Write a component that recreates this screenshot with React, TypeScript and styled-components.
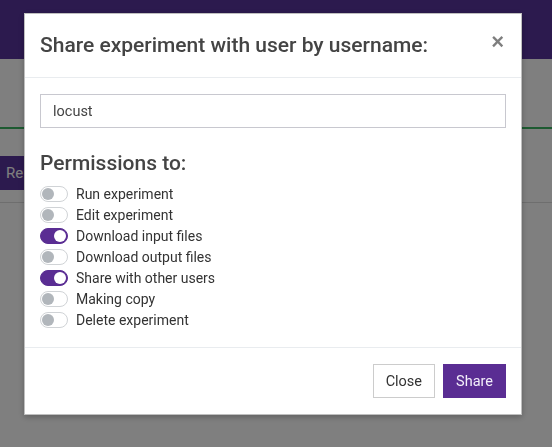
import React, { useState } from "react";
import styled, { createGlobalStyle } from "styled-components";

const Global = createGlobalStyle`
  html, body { margin: 0; padding: 0; }
  body {
    font-family: Roboto, "Liberation Sans", sans-serif;
    background: #ffffff;
    width: 552px;
    height: 447px;
    overflow: hidden;
  }
  * { box-sizing: border-box; }
`;

const Page = styled.div`
  width: 552px;
  height: 447px;
  display: flex;
  flex-direction: column;
  background: #fff;
`;

const TopBar = styled.div`
  height: 59px;
  flex: none;
  background: #58349d;
`;

const SubHeader = styled.div`
  height: 70px;
  flex: none;
  border-bottom: 2px solid #3ab562;
`;

const ActionRow = styled.div`
  height: 74px;
  flex: none;
  display: flex;
  align-items: flex-start;
  padding-top: 27px;
  border-bottom: 1px solid #dcdcdc;
`;

const PageButton = styled.button`
  height: 34px;
  width: 24px;
  overflow: hidden;
  white-space: nowrap;
  text-align: left;
  padding: 0 0 0 6px;
  border: none;
  background: #58349d;
  color: #ffffff;
  font-family: Roboto, sans-serif;
  font-size: 15px;
`;

const Overlay = styled.div`
  position: fixed;
  inset: 0;
  background: rgba(0, 0, 0, 0.5);
  display: flex;
  align-items: flex-start;
  padding: 13px 0 0 24px;
`;

const Modal = styled.div`
  width: 498px;
  background: #fff;
  border: 1px solid rgba(0, 0, 0, 0.25);
  box-shadow: 0 2px 6px rgba(0, 0, 0, 0.25);
  display: flex;
  flex-direction: column;
`;

const Header = styled.div`
  display: flex;
  align-items: flex-start;
  justify-content: space-between;
  padding: 16px 15px 16px 15px;
  border-bottom: 1px solid #e9ecef;
`;

const Title = styled.h5`
  margin: 0;
  font-size: 21px;
  line-height: 31px;
  font-weight: 500;
  color: #444;
`;

const CloseX = styled.button`
  border: none;
  background: transparent;
  padding: 0;
  margin: 1px 2px 0 0;
  font-size: 22px;
  font-weight: 700;
  line-height: 1;
  color: #000;
  opacity: 0.5;
  font-family: "Liberation Sans", Arial, sans-serif;
  cursor: pointer;
`;

const Body = styled.div`
  padding: 16px 15px 17px 15px;
  display: flex;
  flex-direction: column;
`;

const Input = styled.input`
  height: 34px;
  width: 100%;
  border: 1px solid #c8c8cf;
  padding: 0 12px;
  font-family: Roboto, sans-serif;
  font-size: 14.5px;
  color: #444;
  outline: none;
`;

const Heading = styled.h5`
  margin: 20px 0 4px;
  font-size: 21px;
  line-height: 31px;
  font-weight: 500;
  color: #444;
`;

const List = styled.div`
  display: flex;
  flex-direction: column;
`;

const Row = styled.label`
  display: flex;
  align-items: center;
  height: 21px;
  gap: 8px;
  font-size: 14px;
  color: #333;
  cursor: pointer;
`;

const Track = styled.span<{ $on: boolean }>`
  position: relative;
  width: 28px;
  height: 16px;
  border-radius: 8px;
  border: 1px solid ${(p) => (p.$on ? "#5a2d93" : "#d0d3d6")};
  background: ${(p) => (p.$on ? "#5a2d93" : "#fff")};
  flex: none;
`;

const Knob = styled.span<{ $on: boolean }>`
  position: absolute;
  top: 1px;
  left: ${(p) => (p.$on ? "13px" : "1px")};
  width: 12px;
  height: 12px;
  border-radius: 50%;
  background: ${(p) => (p.$on ? "#fff" : "#b1b6bb")};
`;

const Footer = styled.div`
  display: flex;
  justify-content: flex-end;
  gap: 8px;
  padding: 16px 15px 16px;
  border-top: 1px solid #e9ecef;
`;

const Button = styled.button<{ $primary?: boolean }>`
  height: 34px;
  padding: 0 12px;
  font-family: Roboto, sans-serif;
  font-size: 14.5px;
  border: 1px solid ${(p) => (p.$primary ? "#5a2d93" : "#cccccc")};
  background: ${(p) => (p.$primary ? "#5a2d93" : "#fff")};
  color: ${(p) => (p.$primary ? "#f2eefa" : "#333")};
  cursor: pointer;
`;

const perms: [string, boolean][] = [
  ["Run experiment", false],
  ["Edit experiment", false],
  ["Download input files", true],
  ["Download output files", false],
  ["Share with other users", true],
  ["Making copy", false],
  ["Delete experiment", false],
];

export default function App() {
  const [state, setState] = useState(perms.map((p) => p[1]));
  return (
    <>
      <Global />
      <Page>
        <TopBar />
        <SubHeader />
        <ActionRow>
          <PageButton>Re</PageButton>
        </ActionRow>
      </Page>
      <Overlay>
        <Modal>
          <Header>
            <Title>Share experiment with user by username:</Title>
            <CloseX>×</CloseX>
          </Header>
          <Body>
            <Input defaultValue="locust" />
            <Heading>Permissions to:</Heading>
            <List>
              {perms.map(([label], i) => (
                <Row
                  key={label}
                  onClick={() =>
                    setState((s) => s.map((v, j) => (j === i ? !v : v)))
                  }
                >
                  <Track $on={state[i]}>
                    <Knob $on={state[i]} />
                  </Track>
                  {label}
                </Row>
              ))}
            </List>
          </Body>
          <Footer>
            <Button>Close</Button>
            <Button $primary>Share</Button>
          </Footer>
        </Modal>
      </Overlay>
    </>
  );
}
